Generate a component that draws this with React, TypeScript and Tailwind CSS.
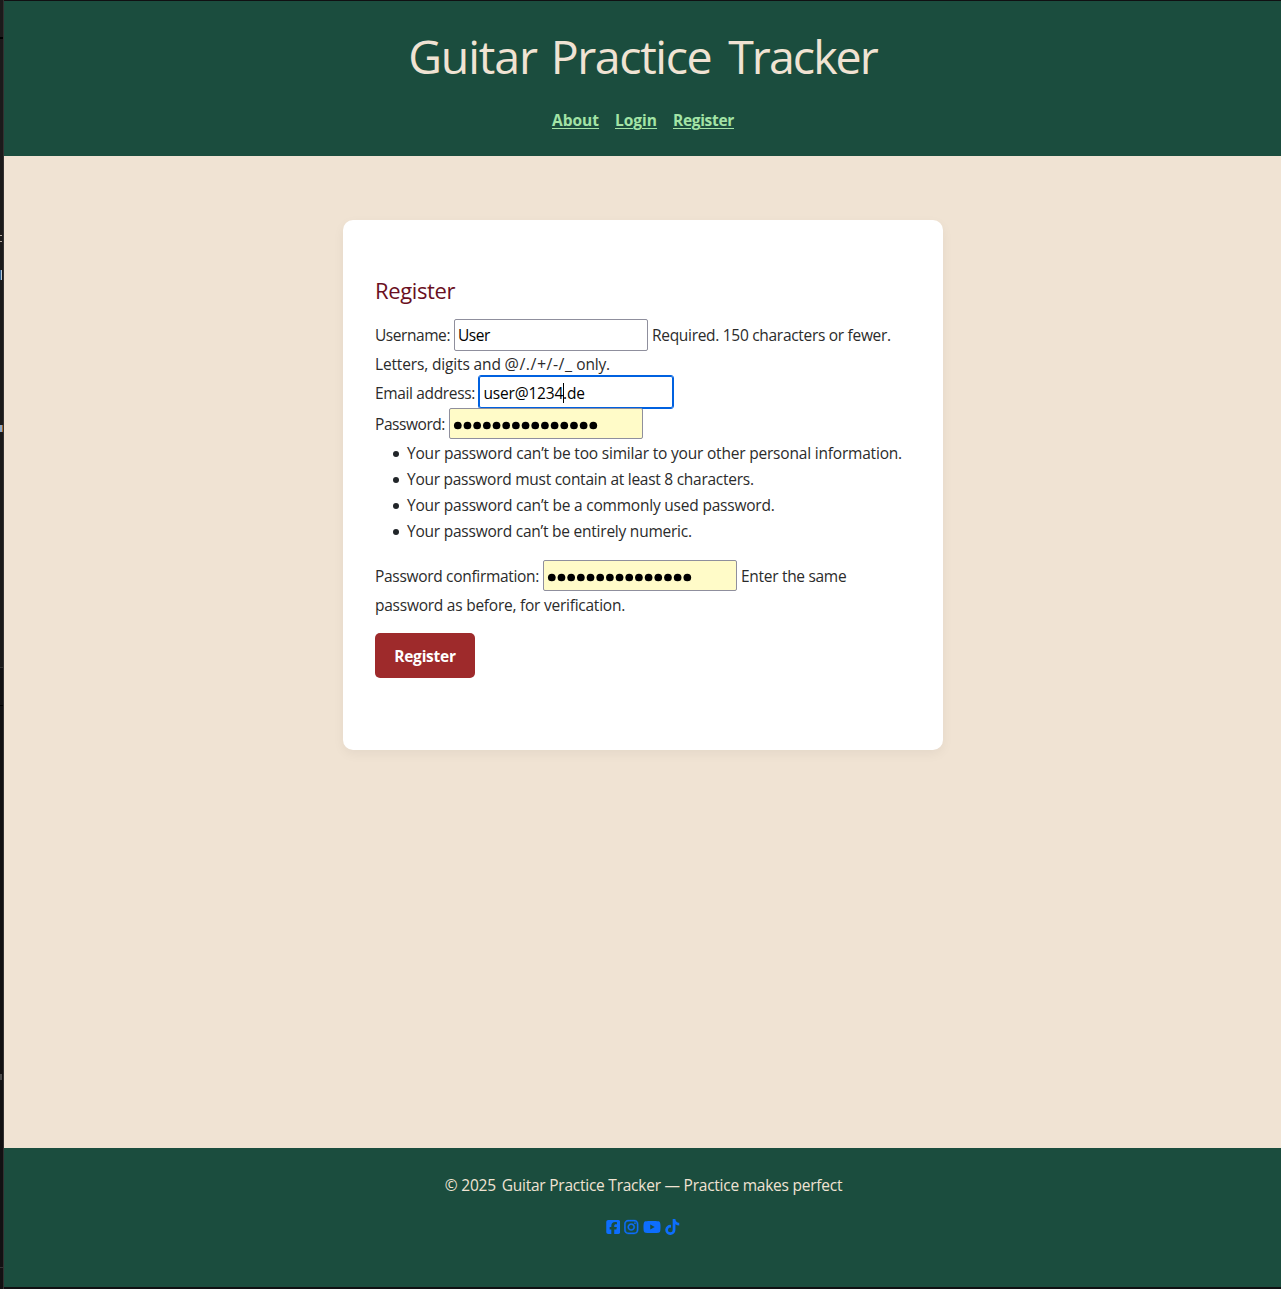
import type { ReactNode } from "react";
import { FaSquareFacebook, FaInstagram, FaYoutube, FaTiktok } from "react-icons/fa6";

function Field({ children, className = "" }: { children: ReactNode; className?: string }) {
  return (
    <div className={`flex w-[194px] items-center rounded-[2px] border border-[#8f8f9d] pl-[3px] text-black ${className}`}>
      {children}
    </div>
  );
}

function PasswordDots() {
  return (
    <svg className="mt-1 h-[9px] w-[150px]" viewBox="0 0 150 9">
      {Array.from({ length: 15 }, (_, i) => (
        <circle key={i} cx={4.8 + i * 9.68} cy={4.5} r={3.85} />
      ))}
    </svg>
  );
}

function Rule({ children, className }: { children: ReactNode; className: string }) {
  return (
    <li className="flex h-[26px] items-center whitespace-nowrap">
      <span className="mb-px mr-2 ml-[18px] size-[6px] rounded-full bg-[#212529]" />
      <span className={className}>{children}</span>
    </li>
  );
}

export default function App() {
  return (
    <div className="flex h-[1289px] w-[1281px] overflow-hidden bg-[#101012] font-['Open_Sans',sans-serif] text-[15.5px] text-[#2b2b2b]">
      {/* Sliver of the editor window behind the page */}
      <div className="flex w-1 shrink-0 flex-col border-r border-[#333131] bg-[#1b1a1a]">
        <div className="h-[37px]" />
        <div className="h-[2px] bg-black" />
        <div className="mt-[196px] h-px w-[2px] bg-[#b5aaa0]" />
        <div className="mt-[5px] h-px w-[2px] bg-[#b5aaa0]" />
        <div className="mt-[28px] flex h-[10px] w-[2px] bg-[#2c5f94]">
          <div className="ml-px w-px bg-[#b9c8d2]" />
        </div>
        <div className="mt-[145px] flex h-[7px] w-[3px] bg-[#8fa9c4]">
          <div className="ml-[2px] w-px bg-[#a8692b]" />
        </div>
        <div className="mt-[235px] h-px bg-[#333]" />
        <div className="flex-1 bg-[#121112]">
          <div className="mt-[37px] h-px bg-black" />
          <div className="mt-[368px] h-[6px] w-[2px] bg-[#4b4a4b]" />
          <div className="mt-[187px] h-px bg-[#333]" />
        </div>
      </div>

      <div className="flex flex-1 flex-col pt-px pb-[2px]">
        <header className="flex h-[155px] flex-col items-center bg-[#1b4d3e]">
          <h1 className="mt-[22px] h-[66px] text-[46.5px] leading-[66px] tracking-[-1.15px] whitespace-nowrap text-[#f0e3d3]">
            Guitar <span className="ml-[3px] tracking-[-1.4px]">Practice</span>{" "}
            <span className="ml-[6px] tracking-[-1.95px]">Tracker</span>
          </h1>
          <nav className="mt-[19px] flex gap-4 pl-px font-bold leading-6 text-[#a3e4a6] underline decoration-1 underline-offset-2">
            <a href="#about" className="w-[47px]">About</a>
            <a href="#login" className="w-[42px]">Login</a>
            <a href="#register" className="w-[61px] tracking-[-0.32px]">Register</a>
          </nav>
        </header>

        <main className="flex-1 bg-[#f0e3d3] pt-16 pl-[339px]">
          <section className="h-[530px] w-[600px] rounded-[10px] bg-white px-8 pt-[57px] shadow-[0_4px_12px_rgba(0,0,0,0.05)]">
            <h2 className="mb-4 h-[26px] text-[22px] leading-[26px] tracking-[-0.38px] text-[#6a0f22]">Register</h2>

            <div className="flex h-8 items-center whitespace-nowrap">
              <label className="w-[79px] pt-[2px] tracking-[-0.44px]">Username:</label>
              <Field className="h-8 bg-white pt-[2px] tracking-[-0.43px]">User</Field>
              <span className="ml-1 pt-[2px] tracking-[-0.3px]">Required. 150 characters or fewer.</span>
            </div>
            <p className="h-[25px] leading-[27px] whitespace-nowrap">
              <span className="tracking-[-0.15px]">Letters, digits and </span>
              <span className="text-[16px] tracking-[0.5px]">@/./+/-/_</span>
              <span className="tracking-[-0.2px]"> only.</span>
            </p>
            <div className="flex h-8 items-center whitespace-nowrap">
              <label className="w-[104px] pt-[3px] tracking-[-0.35px]">Email address:</label>
              <Field className="h-8 pt-[3px] tracking-[-0.19px] outline-1 outline-[#0061e0] border-[#0061e0]!">
                <span className="ml-[0.5px]">user@1234</span>
                <span className="-mt-[2px] -mr-px h-5 w-px bg-black" />
                <span>.de</span>
              </Field>
            </div>
            <div className="relative flex h-[31px] items-center whitespace-nowrap">
              <label className="w-[74px] pt-[2px] tracking-[-0.437px]">Password:</label>
              <Field className="h-[31px] bg-[#fffbc8]">
                <PasswordDots />
              </Field>
            </div>

            <ul className="mt-[2px] mb-[15px]">
              <Rule className="tracking-[-0.195px]">Your password can’t be too similar to your other personal information.</Rule>
              <Rule className="tracking-[-0.265px]">Your password must contain at least 8 characters.</Rule>
              <Rule className="tracking-[-0.21px]">Your password can’t be a commonly used password.</Rule>
              <Rule className="tracking-[-0.23px]">Your password can’t be entirely numeric.</Rule>
            </ul>

            <div className="flex h-[31px] items-center whitespace-nowrap">
              <label className="w-[168px] pt-[2px] tracking-[-0.314px]">Password confirmation:</label>
              <Field className="h-[31px] bg-[#fffbc8]">
                <PasswordDots />
              </Field>
              <span className="ml-1 pt-[2px] tracking-[-0.3px]">Enter the same</span>
            </div>
            <p className="h-7 leading-7 tracking-[-0.243px] whitespace-nowrap">password as before, for verification.</p>

            <button className="mt-[14px] flex h-[45px] w-[100px] items-center justify-center rounded-[5px] bg-[#9e2a2b] pt-[3px] font-bold tracking-[-0.25px] text-white">
              Register
            </button>
          </section>
        </main>

        <footer className="flex h-[139px] flex-col items-center bg-[#1b4d3e] text-[#f0e3d3]">
          <p className="mt-6 pl-[2px] leading-[26px] tracking-[-0.208px] whitespace-nowrap">
            © 2025 <span className="ml-[2px] tracking-[-0.24px]">Guitar Practice Tracker — Practice makes perfect</span>
          </p>
          <div className="mt-[21px] flex gap-[4.2px] pl-[0.5px] text-[#0d6efd]">
            <FaSquareFacebook className="h-4 w-[14.5px]" />
            <FaInstagram className="h-4 w-[14.5px] stroke-current stroke-[12]" />
            <FaYoutube className="h-4 w-[18px]" />
            <FaTiktok className="h-4 w-[14.5px]" />
          </div>
        </footer>
      </div>
    </div>
  );
}
